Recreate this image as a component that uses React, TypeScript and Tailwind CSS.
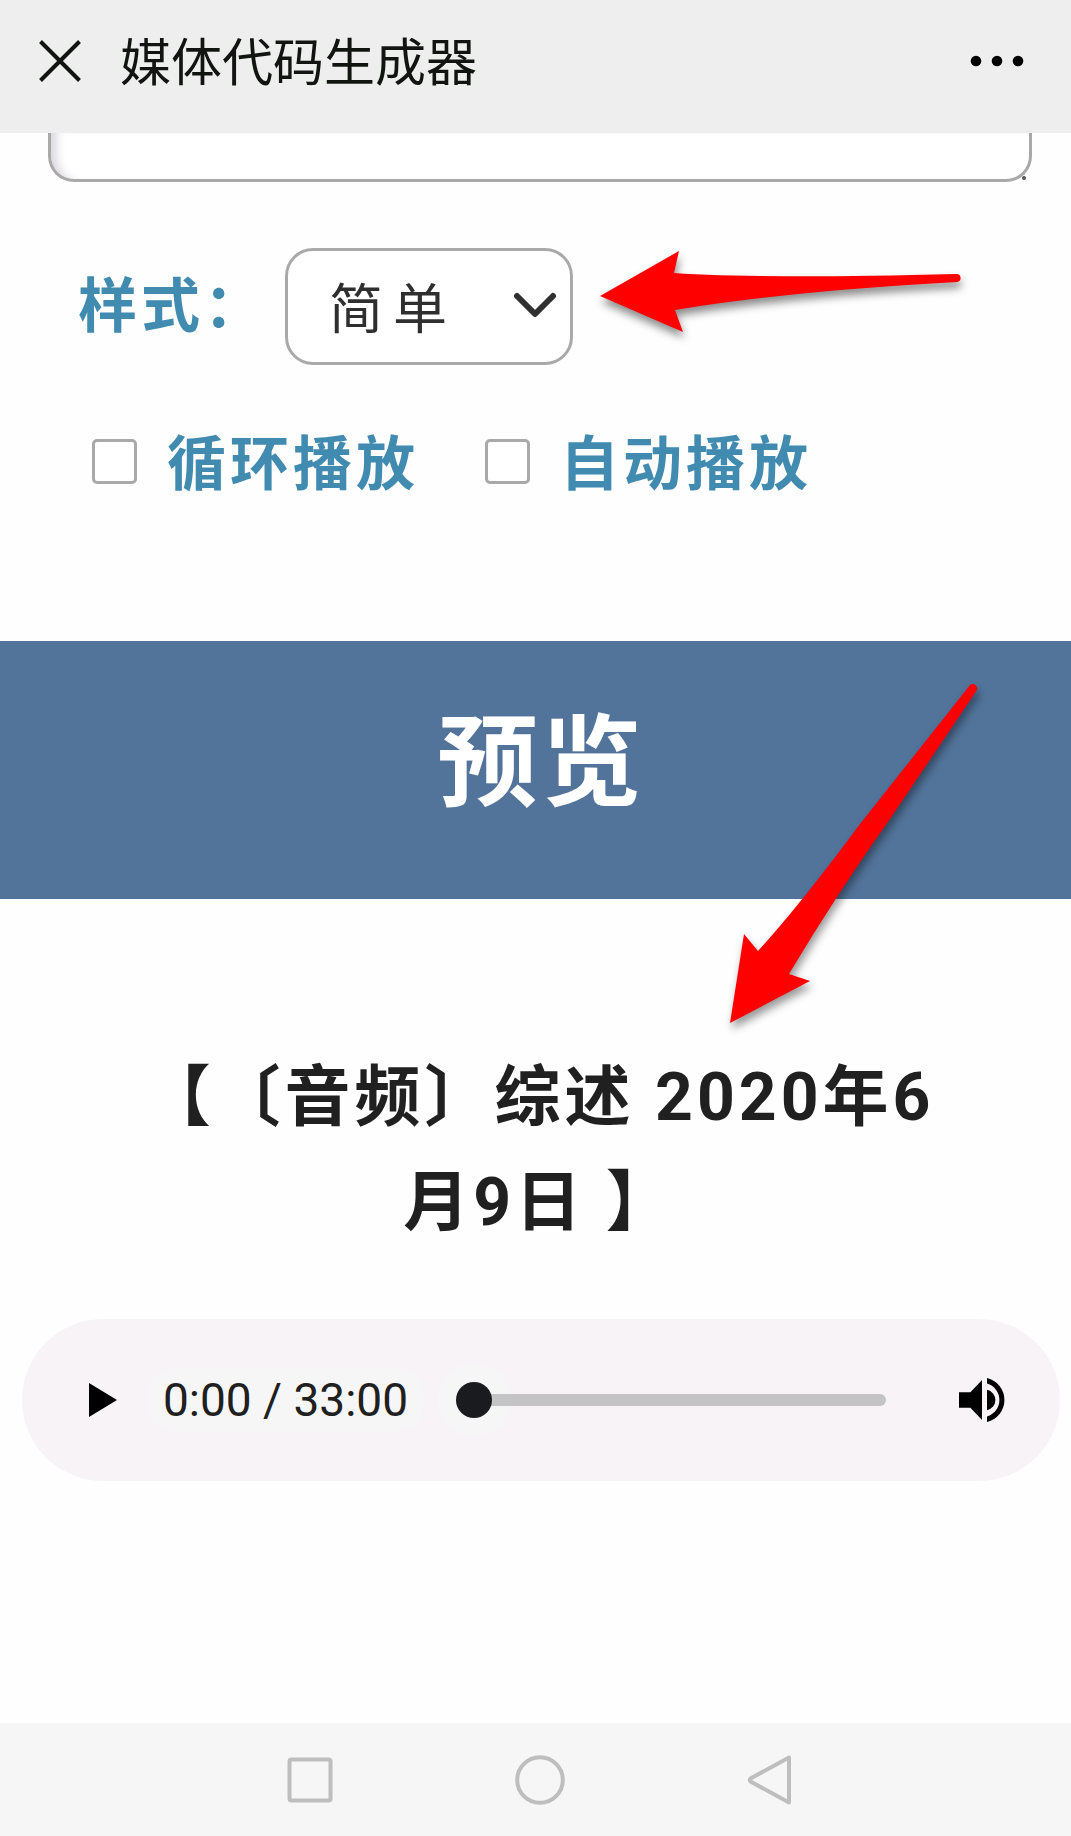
import React, { useState } from "react";

const STYLES = ["简单", "完整"];

interface CheckOptionProps {
  id: string;
  label: string;
  checked: boolean;
  onChange: (value: boolean) => void;
}

const CheckOption: React.FC<CheckOptionProps> = ({ id, label, checked, onChange }) => (
  <div className="flex items-center gap-[30px]">
    <input
      id={id}
      type="checkbox"
      checked={checked}
      onChange={(e) => onChange(e.target.checked)}
      className="h-[45px] w-[45px] shrink-0 appearance-none rounded-[5px] border-[3px] border-[#a9a9a9] bg-white checked:bg-[#418bb0]"
    />
    <label htmlFor={id} className="pt-2 text-[59px] leading-[88px] font-bold tracking-[4px] whitespace-nowrap text-[#418bb0]">
      {label}
    </label>
  </div>
);

const TitleBar: React.FC = () => (
  <header className="flex h-[133px] shrink-0 items-center bg-[#eeeeee] pr-[47px] pb-[11px] pl-[38px]">
    <button type="button" aria-label="关闭">
      <svg width="44" height="44" viewBox="0 0 44 44" fill="none" stroke="#111411" strokeWidth="4" aria-hidden="true">
        <path d="M2.5 2.5L41.5 41.5M41.5 2.5L2.5 41.5" />
      </svg>
    </button>
    <h1 className="ml-[38px] flex-1 pt-1.5 text-[51px] leading-[72px] text-[#111411]">媒体代码生成器</h1>
    <button type="button" aria-label="更多">
      <svg width="54" height="12" viewBox="0 0 54 12" fill="#000" aria-hidden="true">
        <circle cx="6" cy="6" r="5.3" />
        <circle cx="27" cy="6" r="5.3" />
        <circle cx="48" cy="6" r="5.3" />
      </svg>
    </button>
  </header>
);

const OptionsForm: React.FC = () => {
  const [code, setCode] = useState("");
  const [style, setStyle] = useState(STYLES[0]);
  const [loop, setLoop] = useState(false);
  const [autoplay, setAutoplay] = useState(false);

  return (
    <form className="pb-[132px]">
      {/* Lower end of the code box, the rest is scrolled under the title bar */}
      <div className="relative mr-[39px] ml-[48px]">
        <textarea
          aria-label="代码"
          value={code}
          onChange={(e) => setCode(e.target.value)}
          className="block h-[49px] w-full resize-none rounded-b-[26px] border-[3px] border-t-0 border-[#a9a9a9] bg-white px-6 shadow-[inset_12px_0_10px_-6px_#dcd9de] outline-none"
        />
        <span className="absolute right-[6px] bottom-[2px] h-1 w-1 rounded-full bg-[#555]" />
      </div>

      <div className="relative mt-[66px] flex items-center pl-[78px]">
        <label htmlFor="style" className="text-[59px] leading-[88px] font-bold tracking-[4px] whitespace-nowrap text-[#418bb0]">
          样式：
        </label>
        <div className="relative ml-[18px]">
          <select
            id="style"
            value={style}
            onChange={(e) => setStyle(e.target.value)}
            className="block h-[117px] w-[288px] appearance-none rounded-[28px] border-[3px] border-[#a9a9a9] bg-white pt-2 pl-[41px] text-[54px] tracking-[10px] text-[#2f2f2f] outline-none"
          >
            {STYLES.map((s) => (
              <option key={s}>{s}</option>
            ))}
          </select>
          <svg
            className="pointer-events-none absolute top-[44px] right-[16px]"
            width="44"
            height="28"
            viewBox="0 0 44 28"
            fill="none"
            stroke="#2f2f2f"
            strokeWidth="6"
            strokeLinecap="round"
            strokeLinejoin="round"
            aria-hidden="true"
          >
            <path d="M4 4L22 22L40 4" />
          </svg>
        </div>

        {/* Pointer to the style menu */}
        <svg
          className="pointer-events-none absolute top-0 left-[590px] overflow-visible"
          width="380"
          height="100"
          viewBox="590 248 380 100"
          aria-hidden="true"
        >
          <path
            className="drop-shadow-[1px_6px_4px_rgba(0,0,0,0.45)]"
            fill="#fe0000"
            d="M600 296L679 251L674 273Q760 279 956 274A4 4 0 0 1 957 282Q790 291 675 310L683 332Z"
          />
        </svg>
      </div>

      <div className="mt-[48px] flex items-center gap-[66px] pl-[92px]">
        <CheckOption id="loop" label="循环播放" checked={loop} onChange={setLoop} />
        <CheckOption id="autoplay" label="自动播放" checked={autoplay} onChange={setAutoplay} />
      </div>
    </form>
  );
};

const AudioPlayer: React.FC = () => {
  const [position, setPosition] = useState(0);

  return (
    <div className="mr-[11px] ml-[22px] flex h-[162px] items-center rounded-full bg-[#f7f3f7] pr-[55px] pl-[67px]">
      <button type="button" aria-label="播放">
        <svg width="28" height="36" viewBox="0 0 28 36" aria-hidden="true">
          <path d="M0 1L28 18L0 35Z" />
        </svg>
      </button>
      <span className="ml-[30px] rounded-[28px] bg-[#f6f6f6] px-4 text-[46px] leading-[64px] whitespace-nowrap text-[#202020]">
        0:00 / 33:00
      </span>
      <div className="relative ml-[32px] flex flex-1 items-center">
        <span className="absolute left-[-19px] h-[74px] w-[74px] rounded-full bg-[#f6f6f6]" />
        <input
          type="range"
          aria-label="进度"
          min={0}
          max={1980}
          value={position}
          onChange={(e) => setPosition(Number(e.target.value))}
          className="relative h-[36px] w-full appearance-none bg-transparent [&::-webkit-slider-runnable-track]:h-[12px] [&::-webkit-slider-runnable-track]:rounded-full [&::-webkit-slider-runnable-track]:bg-[#c4c3c6] [&::-webkit-slider-thumb]:mt-[-12px] [&::-webkit-slider-thumb]:h-[36px] [&::-webkit-slider-thumb]:w-[36px] [&::-webkit-slider-thumb]:appearance-none [&::-webkit-slider-thumb]:rounded-full [&::-webkit-slider-thumb]:bg-[#191b1e]"
        />
      </div>
      <button type="button" aria-label="静音" className="ml-[73px]">
        <svg width="46" height="46" viewBox="0 0 46 46" aria-hidden="true">
          <path d="M0 15.3H11.4L23 3V43L11.4 30.7H0Z" />
          <path d="M28 12.8A10.4 10.4 0 0 1 28 33.2Z" />
          <path d="M28 1A22.6 22.6 0 0 1 28 45V39.6A17.3 17.3 0 0 0 28 6.4Z" />
        </svg>
      </button>
    </div>
  );
};

const Preview: React.FC = () => (
  <section className="relative">
    <h2 className="h-[258px] bg-[#52749b] pt-12 pl-3 text-center text-[100px] leading-[150px] font-bold tracking-[4px] text-white">
      预览
    </h2>
    <div className="pt-[146px] pl-2">
      <h3 className="mx-auto w-3/4 text-center text-[66px] leading-[105px] font-bold tracking-[4px] text-[#202020] [text-spacing-trim:space-all]">
        【〔音频〕综述 2020年6月9日 】
      </h3>
    </div>
    <div className="mt-16">
      <AudioPlayer />
    </div>

    {/* Pointer to the preview title */}
    <svg
      className="pointer-events-none absolute top-0 left-[720px] overflow-visible"
      width="270"
      height="390"
      viewBox="720 641 270 390"
      aria-hidden="true"
    >
      <path
        className="drop-shadow-[2px_6px_4px_rgba(0,0,0,0.4)]"
        fill="#fe0000"
        d="M730 1023L744 934L758 951Q800 905 860 824L970 685A4.5 4.5 0 0 1 977 690L890 819Q838 892 789 974L810 981Z"
      />
    </svg>
  </section>
);

const NavBar: React.FC = () => (
  <nav className="flex h-[113px] shrink-0 items-center justify-center gap-[178px] bg-[#f6f6f6] pl-2">
    <button type="button" aria-label="最近任务">
      <svg width="52" height="52" viewBox="0 0 52 52" fill="none" stroke="#bebebe" strokeWidth="4" aria-hidden="true">
        <rect x="5.5" y="5.5" width="41" height="41" rx="2" />
      </svg>
    </button>
    <button type="button" aria-label="主页">
      <svg width="52" height="52" viewBox="0 0 52 52" fill="none" stroke="#bebebe" strokeWidth="4" aria-hidden="true">
        <circle cx="26" cy="26" r="22.8" />
      </svg>
    </button>
    <button type="button" aria-label="返回">
      <svg width="52" height="52" viewBox="0 0 52 52" fill="none" stroke="#bebebe" strokeWidth="4" strokeLinejoin="round" aria-hidden="true">
        <path d="M45 3.5V48.5L6.5 27.5Q5 26 6.5 24.5Z" />
      </svg>
    </button>
  </nav>
);

export default function App() {
  return (
    <div className="flex min-h-screen flex-col bg-[#fefefe] font-[Roboto,'Noto_Sans_CJK_SC',sans-serif]">
      <TitleBar />
      <main className="flex-1">
        <OptionsForm />
        <Preview />
      </main>
      <NavBar />
    </div>
  );
}
